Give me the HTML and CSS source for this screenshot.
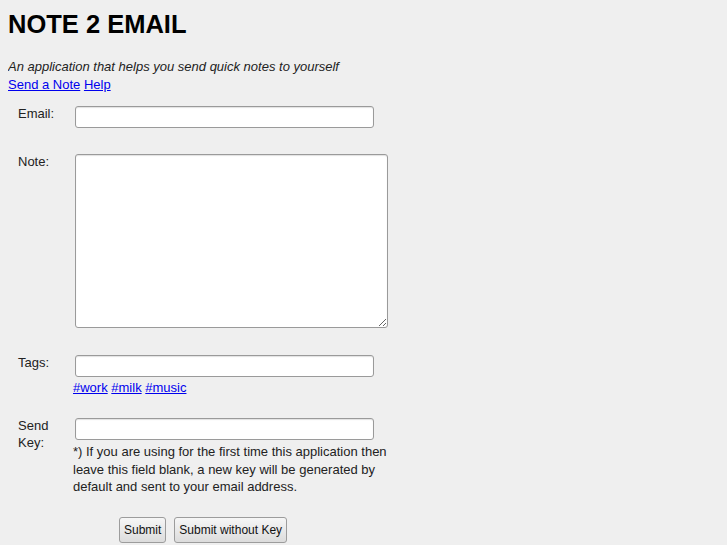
FILE: index.html
```html
<!DOCTYPE html>
<html>
<head>
<meta charset="utf-8">
<title>Note 2 Email</title>
<link rel="stylesheet" href="styles.css">
</head>
<body>
<h1 class="title">NOTE 2 EMAIL</h1>
<p class="tagline">An application that helps you send quick notes to yourself</p>
<div class="nav"><a href="#">Send a Note</a> <a href="#">Help</a></div>
<form class="form">
  <div class="row row-email">
    <label class="lbl">Email:</label>
    <div class="field"><input class="txt" type="text"></div>
  </div>
  <div class="row row-note">
    <label class="lbl">Note:</label>
    <div class="field"><textarea class="area"></textarea></div>
  </div>
  <div class="row row-tags">
    <label class="lbl">Tags:</label>
    <div class="field">
      <input class="txt" type="text">
      <div class="tags"><a href="#">#work</a> <a href="#">#milk</a> <a href="#">#music</a></div>
    </div>
  </div>
  <div class="row row-key">
    <label class="lbl">Send<br>Key:</label>
    <div class="field">
      <input class="txt" type="text">
      <div class="hint">*) If you are using for the first time this application then leave this field blank, a new key will be generated by default and sent to your email address.</div>
    </div>
  </div>
  <div class="actions">
    <button type="button" class="btn">Submit</button>
    <button type="button" class="btn">Submit without Key</button>
  </div>
</form>
</body>
</html>
```

FILE: styles.css
```css
html { background: #efefef; }
body {
  margin: 8px;
  font-family: "Liberation Sans", Arial, sans-serif;
  font-size: 13px;
  color: #222;
  background: #efefef;
}
.title {
  font-size: 25.5px;
  font-weight: bold;
  color: #000;
  margin: 0;
  padding-top: 1px;
  line-height: 30px;
}
.tagline {
  font-style: italic;
  margin: 19px 0 0 0;
  line-height: 17px;
}
.nav { line-height: 18px; padding-top: 1px; }
a { color: #0000ee; }
.form { margin-top: 0; }
.row {
  display: grid;
  grid-template-columns: 55px 1fr;
  padding-left: 10px;
}
.lbl { line-height: 17px; margin-top: -1px; }
.field { display: flex; flex-direction: column; align-items: flex-start; }
.row-email { padding-top: 12px; }
.row-note { padding-top: 26px; }
.row-tags { padding-top: 27px; }
.row-key { padding-top: 22px; }
.txt {
  box-sizing: border-box;
  width: 299px;
  height: 22px;
  margin: 0 0 0 2px;
  border: 1px solid #9a9a9a;
  border-radius: 3px;
  background: #fff;
  box-shadow: inset 0 1px 1px rgba(0,0,0,0.12);
  font: 13px "Liberation Sans", Arial, sans-serif;
}
.area {
  box-sizing: border-box;
  width: 313px;
  height: 174px;
  margin: 0 0 0 2px;
  border: 1px solid #9a9a9a;
  border-radius: 3px;
  background: #fff;
  box-shadow: inset 0 1px 1px rgba(0,0,0,0.12);
}
.tags { margin-top: 2px; line-height: 17px; }
.hint { width: 320px; margin-top: 3px; line-height: 17.5px; color: #222; }
.actions {
  padding: 21px 0 0 111px;
  display: flex;
  gap: 8px;
}
.btn {
  font: 12px "Liberation Sans", Arial, sans-serif;
  color: #111;
  height: 26px;
  padding: 0 4px;
  border: 1px solid #9c9c9c;
  border-radius: 3px;
  background: linear-gradient(#f6f6f6, #dcdcdc);
}
```
